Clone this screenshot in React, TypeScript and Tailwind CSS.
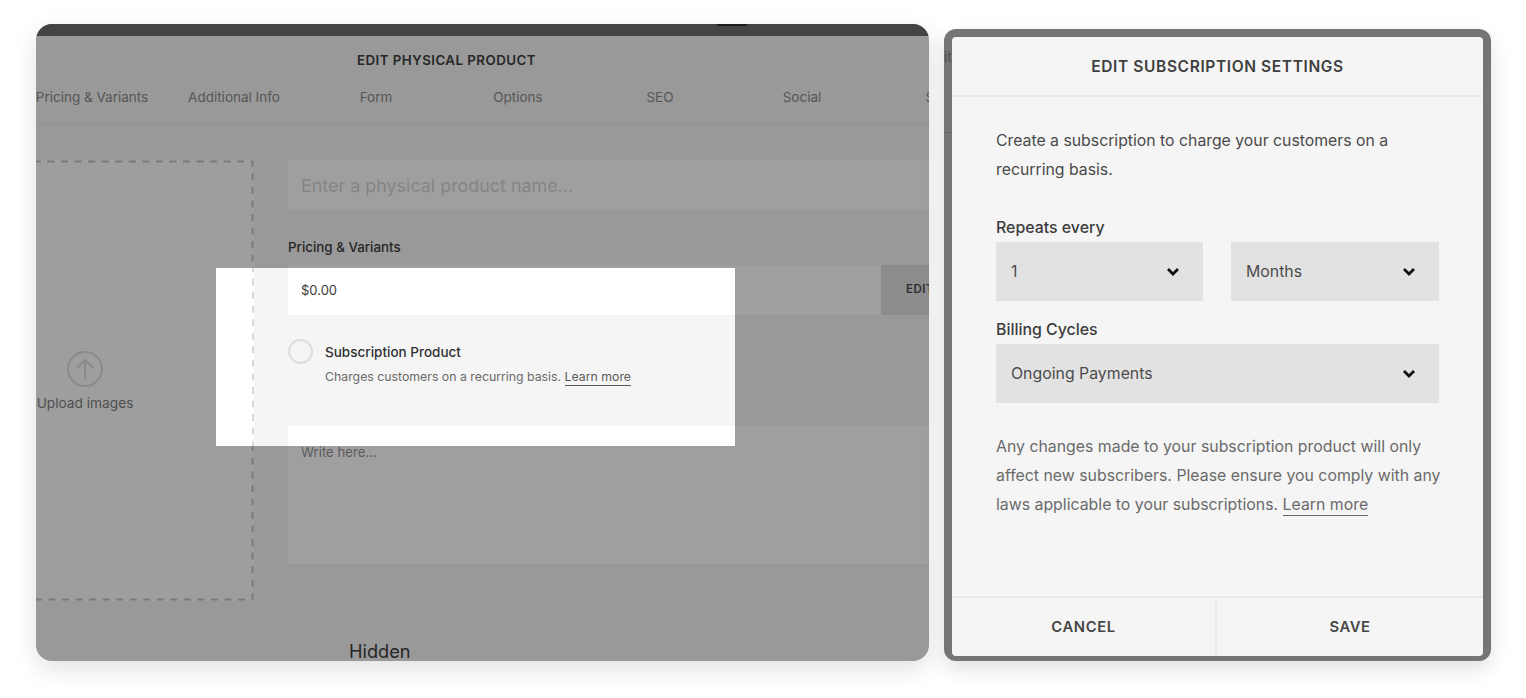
import React from "react";

function Chevron() {
  return (
    <svg width="14" height="10" viewBox="0 0 14 10" fill="none" className="shrink-0">
      <path d="M2 2 L7 7 L12 2" stroke="#111" strokeWidth="2.8" />
    </svg>
  );
}

function Select({ label, className }: { label: string; className: string }) {
  return (
    <div className={`h-[59px] bg-[#e2e2e2] flex items-center justify-between pl-[15px] pr-[23px] text-[15.85px] text-[#4c4c4c] ${className}`}>
      <span>{label}</span>
      <Chevron />
    </div>
  );
}

const tabs = ["Pricing & Variants", "Additional Info", "Form", "Options", "SEO", "Social", "Share"];

export default function App() {
  return (
    <div className="w-[1526px] h-[698px] bg-white flex items-start pl-9 pt-6 gap-[15px] overflow-hidden font-['Inter',sans-serif] antialiased">
      {/* Left: dimmed product editor */}
      <div className="relative w-[893px] h-[637px] rounded-2xl overflow-hidden bg-[#999999] shadow-[0_8px_24px_rgba(0,0,0,0.12)] shrink-0">
        <div className="h-3 bg-[#444444] flex justify-center pl-[498px]">
          <div className="w-[30px] h-0.5 bg-[#1d1d1d]"></div>
        </div>
        <div className="h-[88px] border-b border-[#919191] flex flex-col">
          <div className="h-[50px] pr-[72px] flex items-center justify-center text-[13.3px] font-semibold tracking-[0.035em] text-[#262626]">
            EDIT PHYSICAL PRODUCT
          </div>
          <div className="flex -ml-[15px]">
            {tabs.map((t) => (
              <div key={t} className="w-[142px] shrink-0 text-center text-[13.5px] leading-[22px] text-[#565656] whitespace-nowrap">
                {t}
              </div>
            ))}
          </div>
        </div>

        <div className="flex pt-[36px] w-[1100px] -ml-[120px]">
          <div className="relative w-[338px] h-[441px] bg-[#9e9e9e] flex flex-col items-center justify-center pt-[3px] shrink-0">
            <svg className="absolute inset-0" width="338" height="441" fill="none">
              <path d="M0 1.5 H336.5 V439.5 H0" stroke="#7a7a7a" strokeWidth="2" strokeDasharray="7 6.55" strokeDashoffset="4" />
            </svg>
            <svg width="36" height="36" viewBox="0 0 36 36" fill="none">
              <circle cx="18" cy="18" r="17" stroke="#8a8a8a" strokeWidth="2" />
              <path d="M18 28 V9 M10 17 L18 9 L26 17" stroke="#8a8a8a" strokeWidth="2" />
            </svg>
            <div className="mt-[6px] text-[13.7px] leading-[20px] text-[#4f4f4f]">Upload images</div>
          </div>

          <div className="ml-[34px] w-[728px] shrink-0">
            <div className="h-[50px] bg-[#9f9f9f] pl-[13px] pt-[2px] flex items-center text-[17.9px] text-[#858585]">
              Enter a physical product name...
            </div>
            <div className="mt-[28px] h-[18px] leading-[18px] text-[13.35px] font-medium text-[#262626]">Pricing & Variants</div>
            <div className="mt-[9px] h-[50px] flex">
              <div className="flex-1 bg-[#9f9f9f]"></div>
              <div className="w-[135px] bg-[#8c8c8c] pl-[25px] flex items-center text-[11.5px] font-semibold tracking-[0.04em] text-[#2e2e2e]">
                EDIT
              </div>
            </div>
            <div className="mt-[111px] h-[138px] bg-[#9f9f9f] pl-[13px] pt-[16px] text-[13.2px] leading-5 text-[#5c5c5c]">
              Write here...
            </div>
            <div className="mt-[75px] ml-[61px] text-[18.2px] leading-6 text-[#262626]">Hidden</div>
          </div>
        </div>

        {/* Spotlight over the dimmed form */}
        <div className="absolute left-[180px] top-[244px] w-[519px] h-[178px] bg-white flex">
          <div className="relative w-[38px] shrink-0">
            <svg className="absolute right-0 top-0" width="2" height="178" fill="none">
              <path d="M1 0 V178" stroke="#d9d9d9" strokeWidth="2" strokeDasharray="7 6.55" strokeDashoffset="3" />
            </svg>
          </div>
          <div className="flex-1 bg-[#f5f5f5] pl-[34px] flex flex-col">
            <div className="h-[47px] bg-white pl-[13px] pb-[2px] flex items-center text-[13px] text-[#3a3a3a] shrink-0">$0.00</div>
            <div className="flex-1 flex pt-[24px]">
              <div className="w-[25px] h-[25px] rounded-full border-2 border-[#dcdcdc] shrink-0"></div>
              <div className="ml-3">
                <div className="text-[13.5px] leading-[20px] font-medium text-[#303030] pt-[3px]">Subscription Product</div>
                <div className="mt-[5px] text-[12.3px] leading-[20px] text-[#6a6a6a]">
                  Charges customers on a recurring basis.{" "}
                  <span className="border-b border-[#555555] text-[#5a5a5a] pb-[1px]">Learn more</span>
                </div>
              </div>
            </div>
            <div className="h-5 bg-white shrink-0"></div>
          </div>
        </div>
      </div>

      {/* Right: subscription dialog */}
      <div className="relative mt-[5px] w-[547px] h-[632px] rounded-xl bg-[#757575] p-2 pb-[5px] shadow-[0_8px_20px_rgba(0,0,0,0.12)] shrink-0">
        <div className="absolute left-0 top-5 text-[13px] leading-4 text-[#4d4d4d]">it</div>
        <div className="absolute left-0 top-[103px] w-2 h-px bg-[#696969]"></div>
        <div className="h-full rounded bg-[#f5f5f5] flex flex-col overflow-hidden">
          <div className="h-[60px] border-b-2 border-[#eaeaea] flex items-center justify-center pt-[1px] text-[15.5px] font-semibold tracking-[0.04em] text-[#3f3f3f] shrink-0">
            EDIT SUBSCRIPTION SETTINGS
          </div>
          <div className="flex-1 px-11 pt-[29px]">
            <p className="text-[15.8px] leading-[29px] text-[#4a4a4a]">
              Create a subscription to charge your customers on a recurring basis.
            </p>
            <div className="mt-[34px] h-5 leading-5 text-[15.9px] font-medium text-[#3c3c3c]">Repeats every</div>
            <div className="mt-[4px] flex gap-[28px]">
              <Select label="1" className="w-[207px]" />
              <Select label="Months" className="w-[208px]" />
            </div>
            <div className="mt-[19px] h-5 leading-5 text-[15.9px] font-medium text-[#3c3c3c]">Billing Cycles</div>
            <Select label="Ongoing Payments" className="mt-[4px] w-[443px]" />
            <p className="mt-[29px] -mr-1 text-[15.85px] leading-[29px] text-[#6a6a6a]">
              Any changes made to your subscription product will only affect new subscribers. Please ensure you comply with any laws applicable to your subscriptions.{" "}
              <span className="border-b border-[#666666] pb-[1px]">Learn more</span>
            </p>
          </div>
          <div className="h-[60px] border-t-2 border-[#eaeaea] flex shrink-0 text-[14.8px] font-semibold tracking-[0.04em] text-[#464646]">
            <div className="w-[265px] border-r-2 border-[#eaeaea] flex items-center justify-center">CANCEL</div>
            <div className="flex-1 flex items-center justify-center">SAVE</div>
          </div>
        </div>
      </div>
    </div>
  );
}
